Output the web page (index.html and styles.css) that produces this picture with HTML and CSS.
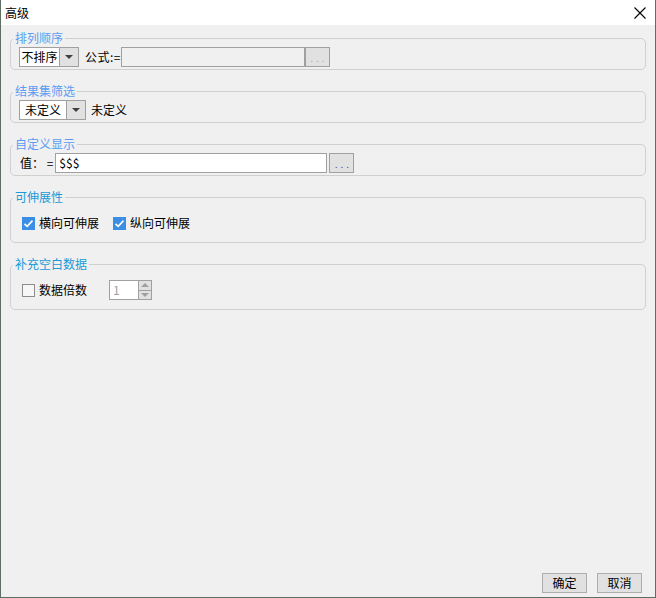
FILE: index.html
```html
<!DOCTYPE html>
<html lang="zh">
<head>
<meta charset="utf-8">
<title>高级</title>
<link rel="stylesheet" href="styles.css">
</head>
<body>
<div class="window">
  <div class="titlebar">
    <span class="title">高级</span>
    <span class="close">
      <svg width="12" height="12" viewBox="0 0 12 12"><path d="M0.5 0.5 L11.5 11.5 M11.5 0.5 L0.5 11.5" stroke="#000" stroke-width="1.1" fill="none"/></svg>
    </span>
  </div>
  <div class="content">
    <fieldset class="group">
      <legend class="legend legend-blue">排列顺序</legend>
      <div class="row">
        <div class="combo combo-sort"><span class="combo-text">不排序</span><span class="combo-btn"><span class="tri"></span></span></div>
        <span class="label formula-label">公式:=</span>
        <div class="field field-disabled formula-field"></div>
        <div class="dots-btn dots-disabled">. . .</div>
      </div>
    </fieldset>

    <fieldset class="group">
      <legend class="legend legend-blue">结果集筛选</legend>
      <div class="row">
        <div class="combo combo-filter"><span class="combo-text">未定义</span><span class="combo-btn"><span class="tri"></span></span></div>
        <span class="label filter-label">未定义</span>
      </div>
    </fieldset>

    <fieldset class="group">
      <legend class="legend legend-blue">自定义显示</legend>
      <div class="row">
        <span class="label value-label">值： =</span>
        <div class="field value-field">$$$</div>
        <div class="dots-btn dots-enabled">. . .</div>
      </div>
    </fieldset>

    <fieldset class="group group-tall">
      <legend class="legend legend-cyan">可伸展性</legend>
      <div class="row">
        <span class="check check-on check-first"><svg width="13" height="13" viewBox="0 0 13 13"><path d="M2.5 6.8 L5.2 9.4 L10.5 3.6" stroke="#fff" stroke-width="1.6" fill="none"/></svg></span>
        <span class="label check-label">横向可伸展</span>
        <span class="check check-on check-second"><svg width="13" height="13" viewBox="0 0 13 13"><path d="M2.5 6.8 L5.2 9.4 L10.5 3.6" stroke="#fff" stroke-width="1.6" fill="none"/></svg></span>
        <span class="label check-label">纵向可伸展</span>
      </div>
    </fieldset>

    <fieldset class="group group-tall">
      <legend class="legend legend-cyan">补充空白数据</legend>
      <div class="row">
        <span class="check check-off check-first"></span>
        <span class="label check-label">数据倍数</span>
        <div class="spinner">
          <div class="spin-field">1</div>
          <div class="spin-arrows">
            <span class="spin-up"><span class="tri-up"></span></span>
            <span class="spin-down"><span class="tri-down"></span></span>
          </div>
        </div>
      </div>
    </fieldset>
  </div>
  <div class="footer">
    <button class="btn">确定</button>
    <button class="btn">取消</button>
  </div>
</div>
</body>
</html>
```

FILE: styles.css
```css
* { box-sizing: border-box; }
html, body { margin: 0; padding: 0; }
body {
  font-family: "Noto Sans CJK SC", "Noto Sans", sans-serif;
  font-size: 12px;
  color: #000;
  background: #f0f0f0;
}
.window {
  width: 656px;
  height: 598px;
  display: flex;
  flex-direction: column;
  background: #f0f0f0;
  border-left: 1px solid #5f6e62;
  border-right: 1px solid #5f6e62;
  border-bottom: 1px solid #5f6e62;
}
.titlebar {
  height: 25px;
  background: #fff;
  display: flex;
  align-items: center;
  justify-content: space-between;
  padding: 0 9px 0 4px;
}
.title { font-size: 12px; line-height: 16px; }
.close { display: flex; width: 12px; height: 12px; }
.content {
  flex: 1;
  display: flex;
  flex-direction: column;
  gap: 13px;
  padding: 5px 9px 0 9px;
}
.group {
  margin: 0;
  border: 1px solid #d0d0d0;
  border-radius: 5px;
  padding: 1px 8px 2px 8px;
  min-inline-size: 0;
}
.group-tall { padding: 8px 8px 9px 8px; }
.legend {
  padding: 0 2px;
  margin-left: -6px;
  font-size: 12px;
  line-height: 16px;
}
.legend-blue { color: #5b9cf2; }
.legend-cyan { color: #1b9ad8; }
.row {
  display: flex;
  align-items: center;
  height: 20px;
}
.label { line-height: 16px; white-space: nowrap; }
.combo {
  display: flex;
  height: 20px;
  border: 1px solid #a0a0a0;
  background: #fff;
}
.combo-sort { width: 60px; }
.combo-filter { width: 67px; }
.combo-text {
  flex: 1;
  text-align: center;
  line-height: 18px;
}
.combo-btn {
  width: 19px;
  border-left: 1px solid #a0a0a0;
  background: #e1e1e1;
  display: flex;
  align-items: center;
  justify-content: center;
}
.tri {
  width: 0; height: 0;
  border-left: 4px solid transparent;
  border-right: 4px solid transparent;
  border-top: 4px solid #404040;
}
.formula-label { margin-left: 6px; width: 36px; letter-spacing: 0.5px; }
.field {
  height: 20px;
  border: 1px solid #a0a0a0;
  background: #fff;
}
.field-disabled { background: #f0f0f0; }
.formula-field { width: 184px; }
.dots-btn {
  width: 25px;
  height: 20px;
  border: 1px solid #a0a0a0;
  background: #e1e1e1;
  font-size: 9px;
  line-height: 22px;
  text-align: center;
  font-family: "DejaVu Sans", sans-serif;
}
.dots-disabled { color: #a0a0a0; }
.dots-enabled { color: #5a2450; margin-left: 2px; }
.filter-label { margin-left: 5px; }
.value-label { margin-left: 1px; }
.value-field {
  width: 272px;
  margin-left: 2px;
  padding-left: 3px;
  line-height: 18px;
}
.check {
  width: 13px;
  height: 13px;
  display: flex;
}
.check-on { background: #3b8ee6; }
.check-off { border: 1px solid #8c8c8c; background: #f7f7f7; }
.check-first { margin-left: 3px; }
.check-second { margin-left: 14px; }
.check-label { margin-left: 4px; }
.spinner { display: flex; margin-left: 22px; height: 20px; }
.spin-field {
  width: 30px;
  border: 1px solid #a0a0a0;
  background: #fff;
  color: #a0a0a0;
  padding-left: 3px;
  line-height: 18px;
}
.spin-arrows {
  width: 13px;
  display: flex;
  flex-direction: column;
  border: 1px solid #a0a0a0;
  border-left: none;
  background: #e1e1e1;
}
.spin-up, .spin-down {
  flex: 1;
  display: flex;
  align-items: center;
  justify-content: center;
}
.spin-up { border-bottom: 1px solid #a0a0a0; }
.tri-up {
  width: 0; height: 0;
  border-left: 4px solid transparent;
  border-right: 4px solid transparent;
  border-bottom: 4px solid #a0a0a0;
}
.tri-down {
  width: 0; height: 0;
  border-left: 4px solid transparent;
  border-right: 4px solid transparent;
  border-top: 4px solid #a0a0a0;
}
.footer {
  display: flex;
  justify-content: flex-end;
  gap: 10px;
  padding: 0 13px 4px 0;
}
.btn {
  width: 45px;
  height: 20px;
  margin: 0;
  padding: 0;
  border: 1px solid #adadad;
  background: #e1e1e1;
  font-family: "Noto Sans CJK SC", "Noto Sans", sans-serif;
  font-size: 12px;
  line-height: 16px;
  color: #000;
}
```
